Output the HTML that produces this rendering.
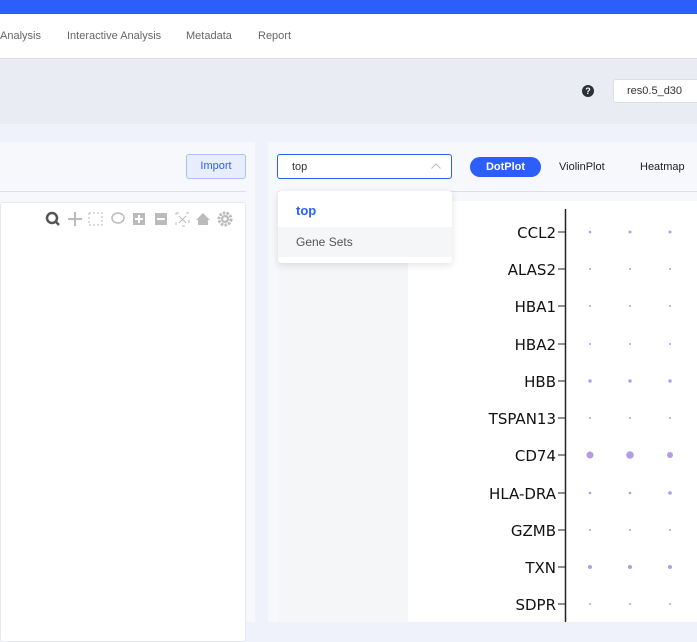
<!DOCTYPE html><html><head><style>
body{margin:0;width:697px;height:622px;overflow:hidden;background:#f0f2fb;font-family:"Liberation Sans",sans-serif;position:relative}
div{position:absolute;box-sizing:border-box}
.nav{font-size:11px;color:#666;top:30px}
</style></head><body>
<div style="left:0;top:0;width:697px;height:14px;background:#2b5efa"></div>
<div style="left:0;top:14px;width:697px;height:45px;background:#fff;border-bottom:1px solid #ddd"></div>
<div class="nav" style="left:0">Analysis</div>
<div class="nav" style="left:67px">Interactive Analysis</div>
<div class="nav" style="left:186px">Metadata</div>
<div class="nav" style="left:258px">Report</div>
<div style="left:0;top:59px;width:697px;height:65px;background:#e9ecf3"></div>
<div style="left:582px;top:85px;width:12px;height:12px;border-radius:50%;background:#2b2f36;color:#fff;font-size:9px;font-weight:bold;text-align:center;line-height:12px">?</div>
<div style="left:613px;top:79px;width:90px;height:24px;background:#fff;border:1px solid #dcdfe6;border-radius:3px;font-size:11px;color:#333;padding:5px 0 0 13px">res0.5_d30</div>
<div style="left:0;top:142px;width:255px;height:480px;background:#f7f8fb"></div>
<div style="left:186px;top:154px;width:60px;height:25px;background:#e8eefd;border:1px solid #a9bff7;border-radius:3px;font-size:11px;color:#2b5efa;text-align:center;line-height:23px">Import</div>
<div style="left:0;top:191px;width:246px;height:1px;background:#dcdfe6"></div>
<div style="left:0;top:202px;width:246px;height:440px;background:#fff;border:1px solid #e6e8ee;border-radius:3px"></div>
<svg style="position:absolute;left:44px;top:210px" width="190" height="18">
<circle cx="8" cy="8" r="5" fill="none" stroke="#555" stroke-width="2.5"/><line x1="11" y1="11" x2="15" y2="15" stroke="#555" stroke-width="2.5"/>
<path d="M31 2v14M24 9h14" stroke="#bbb" stroke-width="2"/>
<rect x="45" y="3" width="13" height="12" fill="none" stroke="#bbb" stroke-dasharray="2 2"/>
<ellipse cx="74" cy="8" rx="6" ry="5" fill="none" stroke="#bbb" stroke-width="1.5"/>
<rect x="89" y="3" width="12" height="12" fill="#bbb"/><path d="M95 5v8M91 9h8" stroke="#fff" stroke-width="2"/>
<rect x="111" y="3" width="12" height="12" fill="#bbb"/><path d="M113 9h8" stroke="#fff" stroke-width="2"/>
<rect x="132" y="3" width="13" height="13" fill="none" stroke="#bbb" stroke-dasharray="3 7"/><path d="M135 6l7 7M142 6l-7 7" stroke="#bbb"/>
<path d="M152 10l7-7 7 7h-2v5h-10v-5z" fill="#bbb"/>
<circle cx="181" cy="9" r="6" fill="none" stroke="#bbb" stroke-width="3" stroke-dasharray="2.5 1.2"/><circle cx="181" cy="9" r="4" fill="#bbb"/><circle cx="181" cy="9" r="1.8" fill="#fff"/>
</svg>
<div style="left:268px;top:142px;width:440px;height:480px;background:#f7f8fb"></div>
<div style="left:278px;top:201px;width:130px;height:421px;background:#f5f6f8"></div>
<div style="left:408px;top:201px;width:290px;height:421px;background:#fff"></div>
<div style="left:278px;top:191px;width:420px;height:1px;background:#dcdfe6"></div>
<div style="left:277px;top:154px;width:175px;height:25px;background:#fff;border:1px solid #2b5efa;border-radius:3px;font-size:11px;color:#333;padding:6px 0 0 14px">top<svg style="position:absolute;right:10px;top:8px" width="10" height="6"><path d="M0.5 5.5L5 1l4.5 4.5" fill="none" stroke="#bbb"/></svg></div>
<div style="left:470px;top:157px;width:71px;height:20px;background:#2b5efa;border-radius:10px;color:#fff;font-size:11px;font-weight:bold;text-align:center;line-height:20px">DotPlot</div>
<div style="left:559px;top:161px;font-size:11px;color:#222">ViolinPlot</div>
<div style="left:640px;top:161px;font-size:11px;color:#222">Heatmap</div>
<div style="left:278px;top:191px;width:174px;height:72px;background:#fff;border-radius:3px;box-shadow:0 2px 8px rgba(0,0,0,.12)"></div>
<div style="left:296px;top:203px;font-size:13px;font-weight:bold;color:#2b5efa">top</div>
<div style="left:278px;top:227px;width:174px;height:30px;background:#f5f6f8"></div>
<div style="left:296px;top:235px;font-size:12px;color:#555">Gene Sets</div>
<svg style="position:absolute;left:408px;top:201px" width="289" height="421" font-family="DejaVu Sans,sans-serif" font-size="15" fill="#111">
<line x1="157.5" y1="8" x2="157.5" y2="421" stroke="#222" stroke-width="1.5"/>
<g text-anchor="end">
<text x="148" y="37">CCL2</text><text x="148" y="74">ALAS2</text><text x="148" y="111">HBA1</text><text x="148" y="149">HBA2</text><text x="148" y="186">HBB</text><text x="148" y="223">TSPAN13</text><text x="148" y="260">CD74</text><text x="148" y="298">HLA-DRA</text><text x="148" y="335">GZMB</text><text x="148" y="372">TXN</text><text x="148" y="409">SDPR</text>
</g>
<g stroke="#222"><path d="M150 31h7M150 68h7M150 105h7M150 143h7M150 180h7M150 217h7M150 254h7M150 292h7M150 329h7M150 366h7M150 403h7"/></g>
<g fill="#b49be6">
<circle cx="182" cy="31" r="1.3"/><circle cx="222" cy="31" r="1.5"/><circle cx="262" cy="31" r="1.5"/>
<circle cx="182" cy="68" r="1"/><circle cx="222" cy="68" r="1"/><circle cx="262" cy="68" r="1"/>
<circle cx="182" cy="105" r="1"/><circle cx="222" cy="105" r="1"/><circle cx="262" cy="105" r="1"/>
<circle cx="182" cy="143" r="1"/><circle cx="222" cy="143" r="1"/><circle cx="262" cy="143" r="1"/>
<circle cx="182" cy="180" r="1.7"/><circle cx="222" cy="180" r="1.7"/><circle cx="262" cy="180" r="1.7"/>
<circle cx="182" cy="217" r="1"/><circle cx="222" cy="217" r="1"/><circle cx="262" cy="217" r="1"/>
<circle cx="182" cy="254" r="3.5"/><circle cx="222" cy="254" r="3.8"/><circle cx="262" cy="254" r="3"/>
<circle cx="182" cy="292" r="1.3"/><circle cx="222" cy="292" r="1.3"/><circle cx="262" cy="292" r="1.8"/>
<circle cx="182" cy="329" r="1"/><circle cx="222" cy="329" r="1"/><circle cx="262" cy="329" r="1"/>
<circle cx="182" cy="366" r="2"/><circle cx="222" cy="366" r="2"/><circle cx="262" cy="366" r="2"/>
<circle cx="182" cy="403" r="1"/><circle cx="222" cy="403" r="1"/><circle cx="262" cy="403" r="1"/>
</g></svg>
</body></html>
